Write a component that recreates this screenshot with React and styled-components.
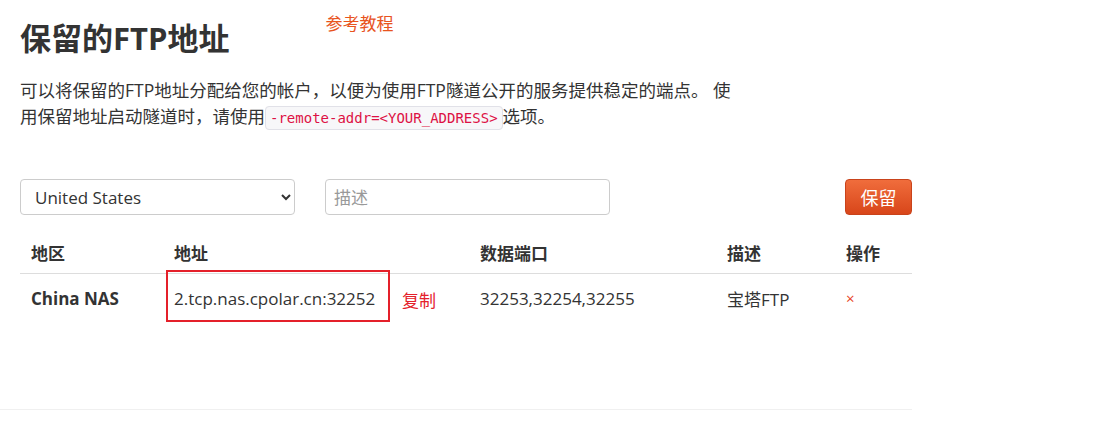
import React, { useState } from 'react'
import styled, { createGlobalStyle } from 'styled-components'

const GlobalStyle = createGlobalStyle`
  body {
    margin: 0;
    background: #fff;
    font-family: "Open Sans", "Noto Sans CJK SC", sans-serif;
    color: #333;
  }
`

const Page = styled.div`
  width: 892px;
  padding: 0 20px;
`

const Header = styled.div`
  display: flex;
  align-items: flex-start;
  height: 70px;
`

const Title = styled.h1`
  margin: 20px 0 0;
  font-size: 31px;
  line-height: 36px;
  font-weight: 700;
  color: #333;
`

const Tutorial = styled.a`
  margin: 13px 0 0 96px;
  font-size: 17px;
  line-height: 22px;
  color: #e8541e;
  text-decoration: none;
  cursor: pointer;
`

const Intro = styled.p`
  margin: 7px 0 0;
  width: 715px;
  font-size: 17.5px;
  line-height: 26px;
  color: #333;
`

const Code = styled.code`
  font-family: "DejaVu Sans Mono", "Liberation Mono", monospace;
  font-size: 14px;
  color: #dd1144;
  background: #f7f7f9;
  border: 1px solid #e1e1e8;
  border-radius: 4px;
  padding: 3px 4px;
`

const Form = styled.form`
  display: flex;
  align-items: center;
  margin-top: 48px;
  gap: 30px;
`

const Select = styled.select`
  width: 275px;
  height: 36px;
  padding: 0 10px;
  font-family: inherit;
  font-size: 17px;
  color: #333;
  background: #fff;
  border: 1px solid #ccc;
  border-radius: 4px;
`

const Input = styled.input`
  width: 285px;
  height: 36px;
  box-sizing: border-box;
  padding: 0 8px;
  font-family: inherit;
  font-size: 17px;
  color: #444;
  border: 1px solid #ccc;
  border-radius: 4px;
  &::placeholder { color: #999; }
`

const SaveButton = styled.button`
  margin-left: auto;
  width: 67px;
  height: 36px;
  font-family: inherit;
  font-size: 18px;
  color: #fff;
  background: linear-gradient(#f06d3c, #d8461a);
  border: 1px solid #c9431b;
  border-radius: 4px;
  cursor: pointer;
`

const Table = styled.div`
  margin-top: 20px;
  display: grid;
  grid-template-columns: 143px 306px 247px 119px 77px;
`

const Cell = styled.div`
  position: relative;
  padding: ${p => (p.head ? '0 11px 4px' : '0 11px')};
  height: ${p => (p.head ? '34px' : '48px')};
  display: flex;
  align-items: center;
  font-size: 17px;
  font-weight: ${p => (p.head || p.bold ? 700 : 400)};
  color: #333;
  border-bottom: ${p => (p.head ? '1px solid #ddd' : 'none')};
`

const Remove = styled.span`
  color: #e8441e;
  font-size: 15px;
  cursor: pointer;
`

const Marker = styled.div`
  position: absolute;
  left: 3px;
  top: -4px;
  width: 224px;
  height: 52px;
  box-sizing: border-box;
  border: 2px solid #e4202a;
`

const CopyNote = styled.span`
  position: absolute;
  left: 239px;
  top: 13px;
  font-size: 17px;
  color: #e4202a;
`

const Divider = styled.div`
  margin-top: 87px;
  width: 912px;
  border-top: 1px solid #f0f0f0;
`

export default function App() {
  const [region, setRegion] = useState('us')
  const [desc, setDesc] = useState('')

  return (
    <>
      <GlobalStyle />
      <Page>
        <Header>
          <Title>保留的FTP地址</Title>
          <Tutorial>参考教程</Tutorial>
        </Header>
        <Intro>
          可以将保留的FTP地址分配给您的帐户，以便为使用FTP隧道公开的服务提供稳定的端点。 使用保留地址启动隧道时，请使用<Code>-remote-addr=&lt;YOUR_ADDRESS&gt;</Code>选项。
        </Intro>
        <Form onSubmit={e => e.preventDefault()}>
          <Select value={region} onChange={e => setRegion(e.target.value)}>
            <option value="us">United States</option>
            <option value="cn">China</option>
          </Select>
          <Input placeholder="描述" value={desc} onChange={e => setDesc(e.target.value)} />
          <SaveButton type="submit">保留</SaveButton>
        </Form>
        <Table>
          <Cell head>地区</Cell>
          <Cell head>地址</Cell>
          <Cell head>数据端口</Cell>
          <Cell head>描述</Cell>
          <Cell head>操作</Cell>
          <Cell bold>China NAS</Cell>
          <Cell>
            2.tcp.nas.cpolar.cn:32252
            <Marker />
            <CopyNote>复制</CopyNote>
          </Cell>
          <Cell>32253,32254,32255</Cell>
          <Cell>宝塔FTP</Cell>
          <Cell><Remove>×</Remove></Cell>
        </Table>
      </Page>
      <Divider />
    </>
  )
}
